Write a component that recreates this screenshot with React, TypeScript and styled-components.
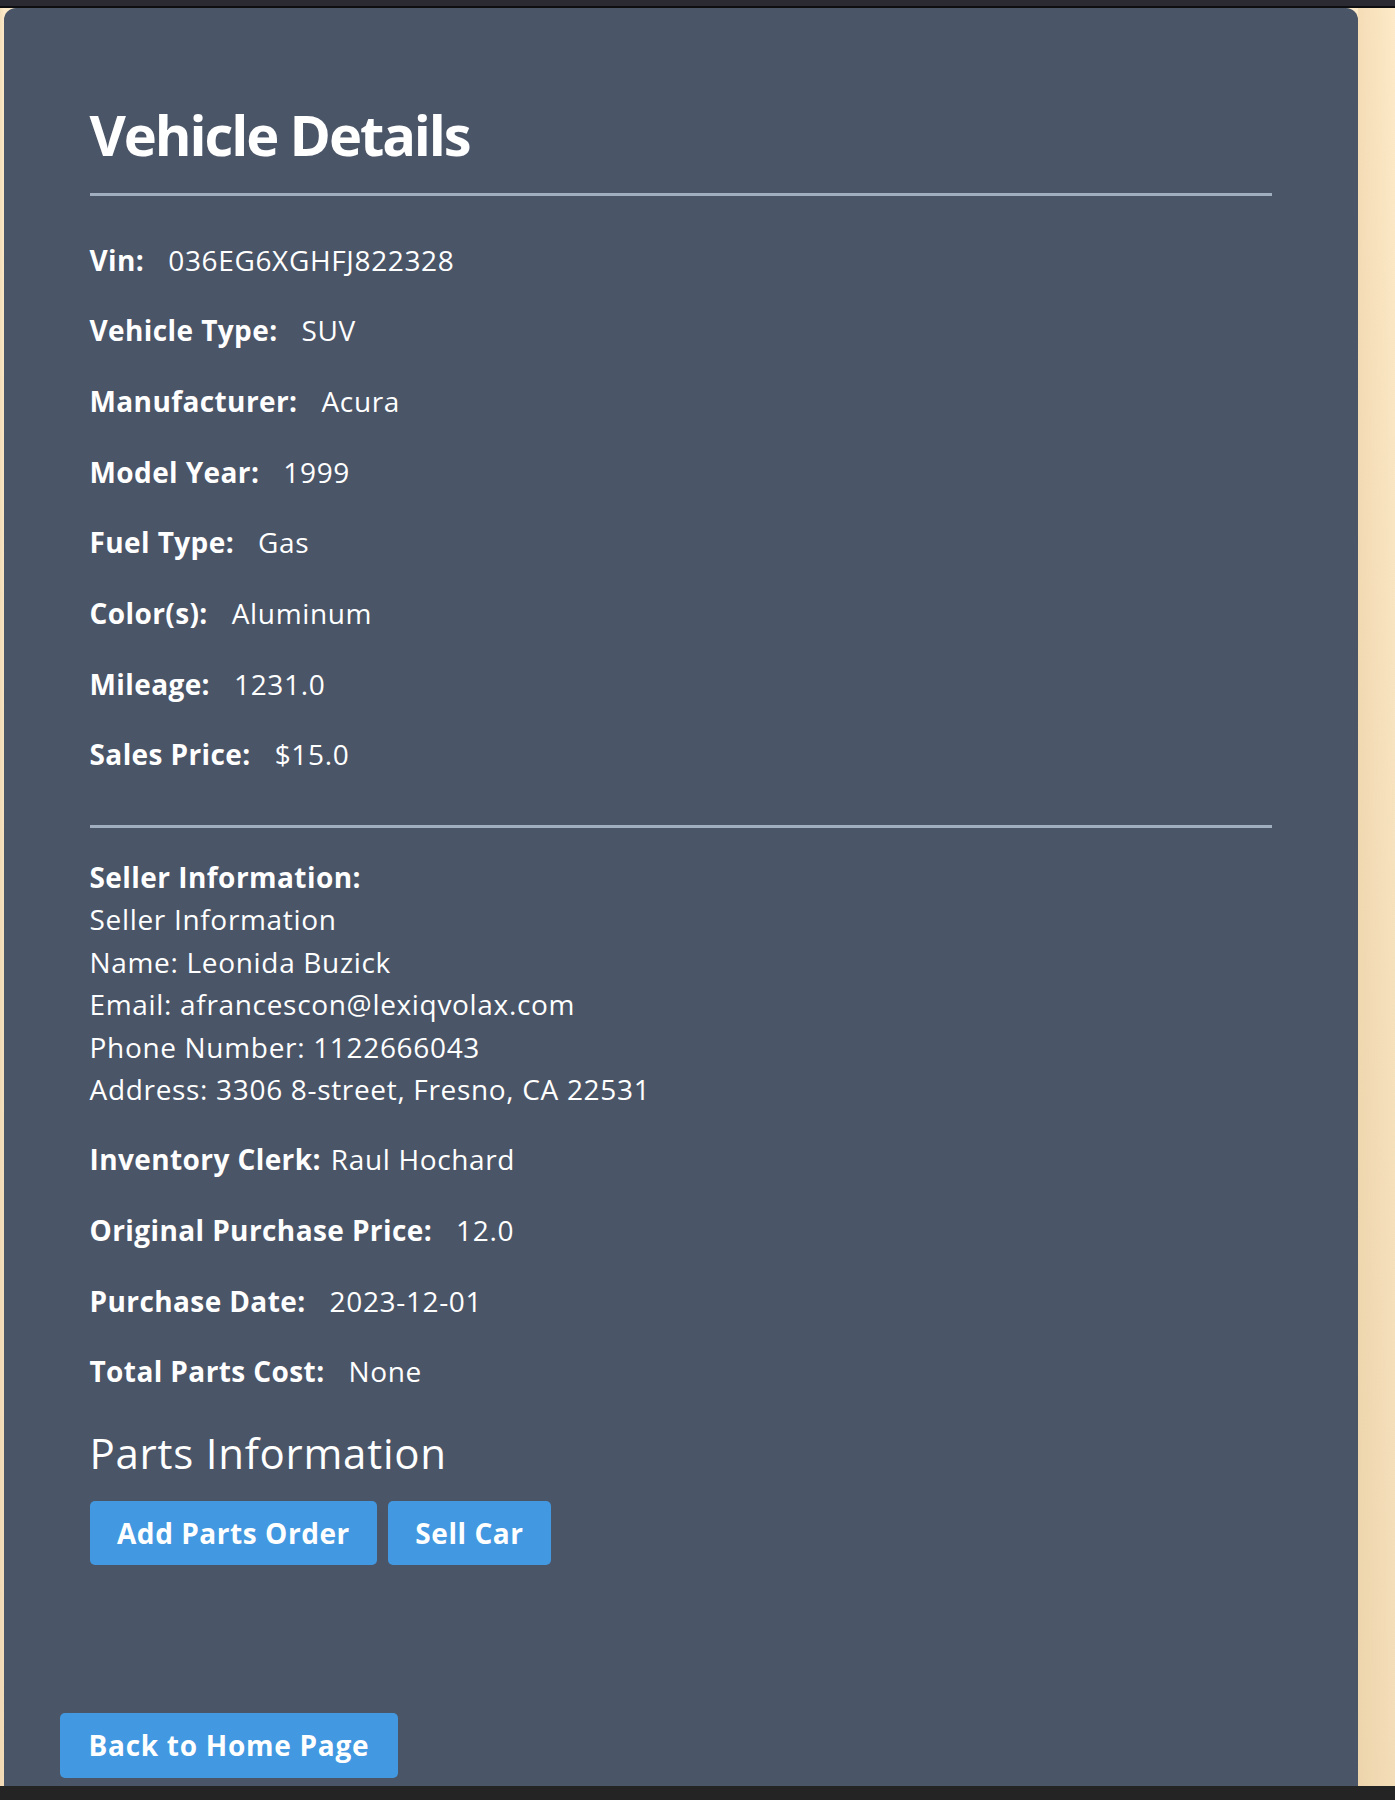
import React from "react";
import styled, { createGlobalStyle } from "styled-components";

const GlobalStyle = createGlobalStyle`
  html, body {
    margin: 0;
    padding: 0;
  }
  body {
    background: linear-gradient(180deg, #feeac8 0%, #f6e1bd 55%, #f3ddb8 100%);
    font-family: "Open Sans", "Noto Sans", sans-serif;
    color: #ffffff;
  }
`;

const Page = styled.div`
  width: 1395px;
  height: 1800px;
  display: flex;
  flex-direction: column;
  overflow: hidden;
  background: linear-gradient(90deg, rgba(238, 214, 176, 0.55) 0%, rgba(255, 255, 255, 0) 4px),
    linear-gradient(90deg, rgba(0, 0, 0, 0) 1358px, rgba(226, 196, 150, 0.35) 1358px, rgba(255, 240, 210, 0) 1395px);
`;

const TopBar = styled.div`
  height: 6px;
  flex: none;
  background: #2b2a33;
  border-bottom: 2px solid #0e0e11;
`;

const Card = styled.section`
  flex: none;
  margin-left: 4px;
  width: 1354px;
  height: 1778px;
  box-sizing: border-box;
  padding: 57px 56px 8px;
  background: #4a5568;
  border-radius: 12px 12px 0 0;
  display: flex;
  flex-direction: column;
  align-items: flex-start;
`;

const Content = styled.div`
  align-self: stretch;
  padding: 0 30px 0 29.5px;
  display: flex;
  flex-direction: column;
  align-items: stretch;
`;

const Title = styled.h1`
  margin: 35.8px 0 0;
  font-size: 56px;
  line-height: 67px;
  font-weight: 700;
  letter-spacing: -2.1px;
`;

const Rule = styled.div<{ $gap: number }>`
  height: 3px;
  margin-top: ${(p) => p.$gap}px;
  background: #a0aec0;
`;

const FieldList = styled.div<{ $gap: number }>`
  margin-top: ${(p) => p.$gap}px;
  display: flex;
  flex-direction: column;
  gap: 28.2px;
`;

const Field = styled.p`
  margin: 0;
  font-size: 28px;
  line-height: 42.5px;
  font-weight: 400;
  letter-spacing: 0.65px;
  white-space: nowrap;
`;

const Label = styled.strong<{ $compact?: boolean }>`
  font-weight: 700;
  letter-spacing: 0.4px;
  margin-right: ${(p) => (p.$compact ? "2px" : "24px")};
`;

const SellerBlock = styled.div`
  margin-top: 27.9px;
  font-size: 28px;
  line-height: 42.5px;
  display: flex;
  flex-direction: column;
`;

const SellerLine = styled.span<{ $bold?: boolean }>`
  font-weight: ${(p) => (p.$bold ? 700 : 400)};
  letter-spacing: ${(p) => (p.$bold ? "0.45px" : "0.68px")};
  white-space: nowrap;
`;

const SectionTitle = styled.h2`
  margin: 34.9px 0 0;
  font-size: 42px;
  line-height: 50.4px;
  font-weight: 400;
  letter-spacing: 0.75px;
`;

const ButtonRow = styled.div`
  margin-top: 23.2px;
  display: flex;
  gap: 10.5px;
`;

const Button = styled.button<{ $tall?: boolean }>`
  border: none;
  border-radius: 5px;
  background: #4299e1;
  color: #ffffff;
  font-family: "Open Sans", "Noto Sans", sans-serif;
  font-size: 28px;
  font-weight: 700;
  letter-spacing: ${(p) => (p.$tall ? "0.72px" : "0.55px")};
  line-height: 42.5px;
  padding: ${(p) => (p.$tall ? "11.25px 28.5px" : "10.35px 27.5px")};
  cursor: pointer;
  white-space: nowrap;
`;

const BackButton = styled(Button)`
  margin-top: auto;
`;

const BottomBar = styled.div`
  flex: none;
  height: 14px;
  background: #242424;
`;

const vehicleFields: [string, string][] = [
  ["Vin:", "036EG6XGHFJ822328"],
  ["Vehicle Type:", "SUV"],
  ["Manufacturer:", "Acura"],
  ["Model Year:", "1999"],
  ["Fuel Type:", "Gas"],
  ["Color(s):", "Aluminum"],
  ["Mileage:", "1231.0"],
  ["Sales Price:", "$15.0"],
];

const sellerLines = [
  "Seller Information",
  "Name: Leonida Buzick",
  "Email: afrancescon@lexiqvolax.com",
  "Phone Number: 1122666043",
  "Address: 3306 8-street, Fresno, CA 22531",
];

const purchaseFields: [string, string, boolean][] = [
  ["Inventory Clerk:", "Raul Hochard", true],
  ["Original Purchase Price:", "12.0", false],
  ["Purchase Date:", "2023-12-01", false],
  ["Total Parts Cost:", "None", false],
];

export default function App() {
  return (
    <>
      <GlobalStyle />
      <Page>
        <TopBar />
        <Card>
          <Content>
            <Title>Vehicle Details</Title>
            <Rule $gap={25.2} />
            <FieldList $gap={42.6}>
              {vehicleFields.map(([label, value]) => (
                <Field key={label}>
                  <Label>{label}</Label>
                  {value}
                </Field>
              ))}
            </FieldList>
            <Rule $gap={49} />
            <SellerBlock>
              <SellerLine $bold>Seller Information:</SellerLine>
              {sellerLines.map((line) => (
                <SellerLine key={line}>{line}</SellerLine>
              ))}
            </SellerBlock>
            <FieldList $gap={27.6}>
              {purchaseFields.map(([label, value, compact]) => (
                <Field key={label}>
                  <Label $compact={compact}>{label}</Label>
                  {compact ? " " : ""}
                  {value}
                </Field>
              ))}
            </FieldList>
            <SectionTitle>Parts Information</SectionTitle>
            <ButtonRow>
              <Button>Add Parts Order</Button>
              <Button>Sell Car</Button>
            </ButtonRow>
          </Content>
          <BackButton $tall>Back to Home Page</BackButton>
        </Card>
        <BottomBar />
      </Page>
    </>
  );
}
